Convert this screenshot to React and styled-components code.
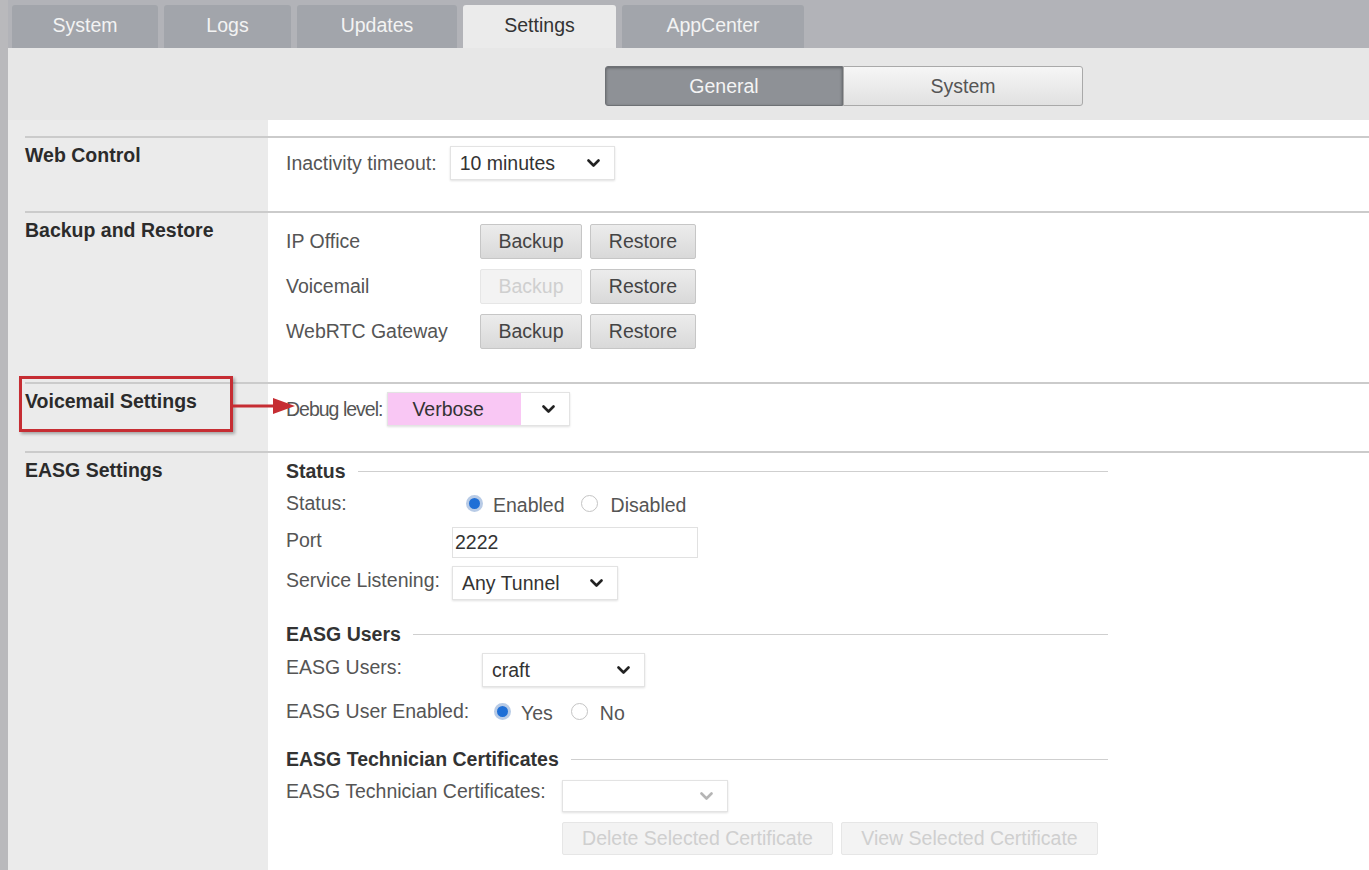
import React from "react";
import styled, { createGlobalStyle } from "styled-components";

const GlobalStyle = createGlobalStyle`
  html, body {
    margin: 0;
    padding: 0;
    background: #ffffff;
  }
  body {
    font-family: "Liberation Sans", Arial, sans-serif;
    font-size: 19.5px;
    color: #555;
  }
  * {
    box-sizing: border-box;
  }
`;

const Page = styled.div`
  display: flex;
  min-height: 100vh;
  width: 1369px;
  overflow: hidden;
`;

const LeftEdge = styled.div`
  width: 8px;
  flex-shrink: 0;
  background: #b9b9bc;
`;

const Main = styled.div`
  flex: 1;
  display: flex;
  flex-direction: column;
`;

const TabBar = styled.div`
  height: 48px;
  background: #b2b3b8;
  display: flex;
  align-items: flex-end;
  gap: 6px;
  padding-left: 4px;
`;

const Tab = styled.div`
  height: 43px;
  width: ${p => p.$w}px;
  display: flex;
  align-items: center;
  justify-content: center;
  background: ${p => (p.$active ? "#ebebeb" : "#a2a5ab")};
  color: ${p => (p.$active ? "#333" : "#f3f3f3")};
  border-radius: 3px 3px 0 0;
  padding-bottom: 2px;
`;

const Header = styled.div`
  height: 72px;
  background: #e7e7e7;
  display: flex;
  align-items: flex-start;
  padding: 18px 0 0 597px;
`;

const SubTab = styled.div`
  width: ${p => p.$w}px;
  height: 40px;
  display: flex;
  align-items: center;
  justify-content: center;
  background: ${p =>
    p.$active ? "#8e9196" : "linear-gradient(#f6f6f6, #e1e1e1)"};
  color: ${p => (p.$active ? "#f4f4f4" : "#555")};
  border: 1px solid ${p => (p.$active ? "#6e7175" : "#a9a9a9")};
  box-shadow: ${p => (p.$active ? "inset 0 1px 3px rgba(0,0,0,0.35)" : "none")};
  border-radius: ${p => (p.$active ? "3px 0 0 3px" : "0 3px 3px 0")};
`;

const Body = styled.div`
  flex: 1;
  padding-top: 16px;
  background: linear-gradient(to right, #ebebeb 260px, #ffffff 260px);
`;

const Section = styled.div`
  margin-left: 17px;
  border-top: 2px solid #cbcbcb;
  display: grid;
  grid-template-columns: 243px 1fr;
  min-height: ${p => p.$h}px;
`;

const SectionLabel = styled.div`
  position: relative;
  padding-top: 6px;
  font-weight: bold;
  color: #2b2b2b;
  line-height: 22px;
`;

const SectionBody = styled.div`
  padding: ${p => p.$pt || 8}px 0 0 18px;
  display: flex;
  flex-direction: column;
`;

const InlineRow = styled.div`
  display: flex;
  align-items: center;
  height: ${p => p.$h || 34}px;
  margin-top: ${p => p.$mt || 0}px;
`;

const FieldLabel = styled.span`
  color: #555;
  width: ${p => (p.$w ? `${p.$w}px` : "auto")};
  margin-right: ${p => p.$gap || 0}px;
  letter-spacing: ${p => p.$tight || 0}px;
  flex-shrink: 0;
  white-space: nowrap;
`;

const SelectBox = styled.div`
  width: ${p => p.$w}px;
  height: ${p => p.$h || 34}px;
  display: flex;
  align-items: center;
  justify-content: space-between;
  padding: 0 14px 0 ${p => p.$pl || 9}px;
  margin-top: ${p => p.$mt || 0}px;
  background: ${p =>
    p.$highlight
      ? `linear-gradient(to right, #f9c7f4 ${p.$highlight}px, #ffffff ${p.$highlight}px)`
      : "#ffffff"};
  border: 1px solid #e3e3e3;
  box-shadow: 0 1px 2px rgba(0, 0, 0, 0.12);
  color: #333;
  svg {
    flex-shrink: 0;
  }
`;

const Btn = styled.div`
  width: ${p => p.$w}px;
  height: ${p => p.$h || 35}px;
  display: flex;
  align-items: center;
  justify-content: center;
  border: 1px solid ${p => (p.$disabled ? "#e6e6e6" : "#c6c6c6")};
  background: ${p =>
    p.$disabled ? "#f3f3f3" : "linear-gradient(#ececec, #d9d9d9)"};
  color: ${p => (p.$disabled ? "#cfcfcf" : "#444")};
  border-radius: 2px;
  white-space: nowrap;
`;

const ButtonGroup = styled.div`
  display: flex;
  gap: 8px;
`;

const BackupList = styled.div`
  display: flex;
  flex-direction: column;
  gap: 10px;
`;

const TextInput = styled.div`
  width: ${p => p.$w}px;
  height: 31px;
  border: 1px solid #e1e1e1;
  display: flex;
  align-items: center;
  padding-left: 2px;
  color: #333;
  margin-top: 5px;
`;

const Legend = styled.div`
  display: flex;
  align-items: center;
  width: 822px;
  height: 22px;
  margin-top: ${p => p.$mt || 0}px;
  font-weight: bold;
  color: #333;
  &::after {
    content: "";
    flex: 1;
    height: 1px;
    background: #cfcfcf;
    margin-left: 12px;
  }
`;

const RadioGroup = styled.div`
  display: flex;
  align-items: center;
  margin-left: ${p => p.$ml || 0}px;
`;

const RadioDot = styled.span`
  width: 17px;
  height: 17px;
  border-radius: 50%;
  flex-shrink: 0;
  margin-right: ${p => p.$mr || 10}px;
  border: ${p => (p.$checked ? "3px solid #b8cbe6" : "1px solid #c4c4c4")};
  background: ${p => (p.$checked ? "#1f6fd6" : "#ffffff")};
`;

const RadioText = styled.span`
  color: #555;
  margin-right: ${p => p.$mr || 0}px;
  padding-top: 4px;
`;

const Annotation = styled.div`
  position: absolute;
  left: -6px;
  top: -8px;
  width: 214px;
  height: 56px;
  border: 3px solid #c62d33;
  box-shadow: 2px 2px 3px rgba(0, 0, 0, 0.3);
  pointer-events: none;
`;

const Arrow = styled.svg`
  position: absolute;
  left: 206px;
  top: 11px;
`;

const Chevron = ({ color = "#222" }) => (
  <svg width="13" height="9" viewBox="0 0 13 9">
    <polyline
      points="1.5,1.5 6.5,6.5 11.5,1.5"
      fill="none"
      stroke={color}
      strokeWidth="2.6"
      strokeLinecap="round"
      strokeLinejoin="round"
    />
  </svg>
);

const Select = ({ value, w, h, mt, pl, highlight, muted }) => (
  <SelectBox $w={w} $h={h} $mt={mt} $pl={pl} $highlight={highlight}>
    <span>{value}</span>
    <Chevron color={muted ? "#b5b5b5" : "#222"} />
  </SelectBox>
);

const tabs = [
  { name: "System", w: 146 },
  { name: "Logs", w: 127 },
  { name: "Updates", w: 160 },
  { name: "Settings", w: 153, active: true },
  { name: "AppCenter", w: 182 }
];

const backups = [
  { name: "IP Office", disabled: false },
  { name: "Voicemail", disabled: true },
  { name: "WebRTC Gateway", disabled: false }
];

export default function App() {
  return (
    <Page>
      <GlobalStyle />
      <LeftEdge />
      <Main>
        <TabBar>
          {tabs.map(t => (
            <Tab key={t.name} $w={t.w} $active={t.active}>
              {t.name}
            </Tab>
          ))}
        </TabBar>
        <Header>
          <SubTab $w={238} $active>
            General
          </SubTab>
          <SubTab $w={240}>System</SubTab>
        </Header>
        <Body>
          <Section $h={75}>
            <SectionLabel>Web Control</SectionLabel>
            <SectionBody>
              <InlineRow>
                <FieldLabel $gap={13}>Inactivity timeout:</FieldLabel>
                <Select value="10 minutes" w={165} />
              </InlineRow>
            </SectionBody>
          </Section>

          <Section $h={171}>
            <SectionLabel>Backup and Restore</SectionLabel>
            <SectionBody $pt={11}>
              <BackupList>
                {backups.map(b => (
                  <InlineRow key={b.name} $h={35}>
                    <FieldLabel $w={194}>{b.name}</FieldLabel>
                    <ButtonGroup>
                      <Btn $w={102} $disabled={b.disabled}>
                        Backup
                      </Btn>
                      <Btn $w={106}>Restore</Btn>
                    </ButtonGroup>
                  </InlineRow>
                ))}
              </BackupList>
            </SectionBody>
          </Section>

          <Section $h={69}>
            <SectionLabel>
              Voicemail Settings
              <Annotation />
              <Arrow width="64" height="22" viewBox="0 0 64 22">
                <line x1="0" y1="11" x2="46" y2="11" stroke="#c62d33" strokeWidth="3" />
                <polygon points="42,3 64,11 42,19" fill="#c62d33" />
              </Arrow>
            </SectionLabel>
            <SectionBody>
              <InlineRow>
                <FieldLabel $gap={5} $tight={-1}>Debug level:</FieldLabel>
                <Select value="Verbose" w={183} pl={24} highlight={133} />
              </InlineRow>
            </SectionBody>
          </Section>

          <Section $h={420}>
            <SectionLabel>EASG Settings</SectionLabel>
            <SectionBody $pt={7}>
              <Legend>Status</Legend>
              <InlineRow $mt={4}>
                <FieldLabel $w={166}>Status:</FieldLabel>
                <RadioGroup $ml={14}>
                  <RadioDot $checked />
                  <RadioText $mr={16}>Enabled</RadioText>
                  <RadioDot $mr={13} />
                  <RadioText>Disabled</RadioText>
                </RadioGroup>
              </InlineRow>
              <InlineRow $mt={3}>
                <FieldLabel $w={166}>Port</FieldLabel>
                <TextInput $w={246}>2222</TextInput>
              </InlineRow>
              <InlineRow $mt={6}>
                <FieldLabel $w={166}>Service Listening:</FieldLabel>
                <Select value="Any Tunnel" w={166} mt={6} />
              </InlineRow>

              <Legend $mt={26}>EASG Users</Legend>
              <InlineRow $mt={5}>
                <FieldLabel $w={196}>EASG Users:</FieldLabel>
                <Select value="craft" w={163} mt={6} />
              </InlineRow>
              <InlineRow $mt={10}>
                <FieldLabel $w={206}>EASG User Enabled:</FieldLabel>
                <RadioGroup $ml={2}>
                  <RadioDot $checked />
                  <RadioText $mr={18}>Yes</RadioText>
                  <RadioDot $mr={12} />
                  <RadioText>No</RadioText>
                </RadioGroup>
              </InlineRow>

              <Legend $mt={20}>EASG Technician Certificates</Legend>
              <InlineRow $mt={4}>
                <FieldLabel $w={276}>EASG Technician Certificates:</FieldLabel>
                <Select value="" w={166} h={32} mt={10} muted />
              </InlineRow>
              <InlineRow $mt={14} $h={33}>
                <FieldLabel $w={276} />
                <ButtonGroup>
                  <Btn $w={271} $h={33} $disabled>
                    Delete Selected Certificate
                  </Btn>
                  <Btn $w={257} $h={33} $disabled>
                    View Selected Certificate
                  </Btn>
                </ButtonGroup>
              </InlineRow>
            </SectionBody>
          </Section>
        </Body>
      </Main>
    </Page>
  );
}
